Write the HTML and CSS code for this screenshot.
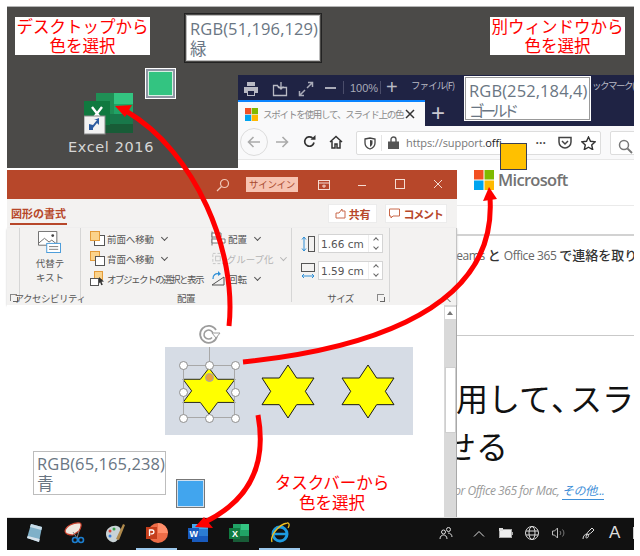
FILE: index.html
```html
<!DOCTYPE html>
<html lang="ja">
<head>
<meta charset="utf-8">
<title>スポイトで色を選択</title>
<link rel="stylesheet" href="styles.css">
</head>
<body>
<main class="stage">
  <section class="wallpaper">
    <div class="desk-icon">
      <svg class="excel-big" width="50" height="42" viewBox="0 0 50 42">
        <rect x="12" y="0" width="37" height="40" fill="#1f8f55"/>
        <rect x="30" y="0" width="19" height="11" fill="#33c481"/>
        <rect x="30" y="11" width="19" height="10" fill="#21a366"/>
        <rect x="12" y="21" width="37" height="10" fill="#18784a"/>
        <rect x="12" y="31" width="37" height="9" fill="#185c37"/>
        <rect x="0" y="8" width="26" height="24" fill="#10793f"/>
        <path d="M8 14l10 13M18 14L8 27" stroke="#fff" stroke-width="2.400"/>
        <rect x="0" y="23" width="21" height="18" fill="#f2f2f2" stroke="#8a8a8a"/>
        <path d="M5 37v-6l4 1 4-5h-3l5-2v7l-2-2-4 5v2z" fill="#2b5aa0"/>
      </svg>
      <span class="desk-label">Excel 2016</span>
    </div>
  </section>

  <section class="browser">
    <div class="fx-menu">
      <svg width="16" height="16" viewBox="0 0 16 16" class="fx-i1"><path d="M4 1h8v4H4zM1 6h14v6h-3v3H4v-3H1z" fill="#b9bac4"/><rect x="5" y="10" width="6" height="4" fill="#1f2344"/></svg>
      <svg width="16" height="16" viewBox="0 0 16 16" class="fx-i2"><path d="M1.500 4.500h4l1 2h8v8h-13zM9 1v7M6.500 5.500L9 8l2.500-2.500" fill="none" stroke="#b9bac4" stroke-width="1.300"/></svg>
      <svg width="16" height="16" viewBox="0 0 16 16" class="fx-i3"><path d="M9 7l5-5M10 1.500h4.500V6M7 9l-5 5M1.500 10v4.500H6" fill="none" stroke="#a9abb8" stroke-width="1.500"/></svg>
      <span class="fx-dash"></span>
      <span class="fx-sep"></span>
      <span class="fx-zoom">100%</span>
      <span class="fx-sep"></span>
      <span class="fx-plus">+</span>
      <span class="fx-file">ファイル(F)</span>
      <span class="fx-book">ックマーク(B)</span>
    </div>
    <div class="fx-tabs">
      <div class="fx-tab">
        <svg width="13" height="13" viewBox="0 0 13 13"><rect width="6.200" height="6.200" fill="#f25022"/><rect x="6.800" width="6.200" height="6.200" fill="#7fba00"/><rect y="6.800" width="6.200" height="6.200" fill="#00a4ef"/><rect x="6.800" y="6.800" width="6.200" height="6.200" fill="#ffb900"/></svg>
        <span class="fx-tab-text">スポイトを使用して、スライド上の色</span>
        <svg width="10" height="10" viewBox="0 0 10 10"><path d="M1 1l8 8M9 1l-8 8" stroke="#333" stroke-width="1.500"/></svg>
      </div>
      <span class="fx-newtab">+</span>
    </div>
    <div class="fx-toolbar">
      <span class="fx-back"><svg width="14" height="12" viewBox="0 0 14 12"><path d="M13 6H2M6.500 1L1.500 6l5 5" fill="none" stroke="#aaa" stroke-width="1.600"/></svg></span>
      <svg class="fx-fwd" width="14" height="12" viewBox="0 0 14 12"><path d="M1 6h11M7.500 1l5 5-5 5" fill="none" stroke="#aaa" stroke-width="1.600"/></svg>
      <svg class="fx-reload" width="13" height="13" viewBox="0 0 13 13"><path d="M11 7.500A4.700 4.700 0 1 1 9.500 3" fill="none" stroke="#333" stroke-width="1.700"/><path d="M7.500 4.800h5V0z" fill="#333"/></svg>
      <svg class="fx-home" width="14" height="14" viewBox="0 0 14 14"><path d="M1 7l6-5.500L13 7M3 6v7h3V9h2v4h3V6" fill="none" stroke="#333" stroke-width="1.500"/></svg>
      <div class="fx-url">
        <svg class="fx-shield" width="12" height="13" viewBox="0 0 12 13"><path d="M1 2l5-1 5 1v4c0 3-2 5-5 6-3-1-5-3-5-6z" fill="none" stroke="#444" stroke-width="1.300"/><path d="M6 3l2.500.6V6C8.500 8 7.500 9 6 9.800z" fill="#444"/></svg>
        <span class="fx-divider"></span>
        <svg class="fx-lock" width="11" height="13" viewBox="0 0 11 13"><path d="M3 6V3.500a2.500 2.500 0 0 1 5 0V6" fill="none" stroke="#555" stroke-width="1.400"/><rect y="5.500" width="11" height="7.500" fill="#555"/></svg>
        <span class="fx-addr"><span class="fx-proto">https://support.</span>offi</span>
        <span class="fx-dots">•••</span>
        <svg class="fx-pocket" width="14" height="13" viewBox="0 0 14 13"><path d="M1 1.500h12V6c0 3.500-3 6-6 6s-6-2.500-6-6z" fill="none" stroke="#444" stroke-width="1.500"/><path d="M4 5l3 3 3-3" fill="none" stroke="#444" stroke-width="1.500"/></svg>
        <svg class="fx-star" width="15" height="14" viewBox="0 0 15 14"><path d="M7.500 1l2 4.300 4.700.5-3.500 3.200 1 4.600-4.200-2.400-4.200 2.400 1-4.600L.8 5.800l4.700-.5z" fill="none" stroke="#333" stroke-width="1.400"/></svg>
      </div>
      <div class="fx-search"><svg width="15" height="15" viewBox="0 0 15 15"><circle cx="6" cy="6" r="4.500" fill="none" stroke="#777" stroke-width="1.500"/><path d="M9.500 9.500l4.500 4.500" stroke="#777" stroke-width="1.800"/></svg></div>
    </div>
    <div class="fx-page">
      <div class="ms-head">
        <svg width="20" height="20" viewBox="0 0 20 20"><rect width="9.500" height="9.500" fill="#f25022"/><rect x="10.500" width="9.500" height="9.500" fill="#7fba00"/><rect y="10.500" width="9.500" height="9.500" fill="#00a4ef"/><rect x="10.500" y="10.500" width="9.500" height="9.500" fill="#ffb900"/></svg>
        <span class="ms-name">Microsoft</span>
      </div>
      <div class="ms-nav"></div>
      <p class="ms-crumb"><span class="ms-latin">Teams</span> と <span class="ms-latin">Office 365</span> で連絡を取り合</p>
      <div class="ms-rule"></div>
      <h1 class="ms-title"><span class="ms-l1">用して<span class="ms-comma">、</span>スライ</span><span class="ms-l2">せる</span></h1>
      <p class="ms-applies">For Office 365 for Mac, <a class="ms-more">その他...</a></p>
    </div>
  </section>

  <section class="ppt">
    <div class="ppt-title">
      <svg class="ppt-search" width="14" height="14" viewBox="0 0 14 14"><circle cx="8.500" cy="5.500" r="4" fill="none" stroke="#f0c8b8" stroke-width="1.200"/><path d="M5.500 8.500L1 13" stroke="#f0c8b8" stroke-width="1.200"/></svg>
      <span class="ppt-signin">サインイン</span>
      <svg class="ppt-ctl ppt-ribbonmode" width="12" height="10" viewBox="0 0 12 10"><rect x=".5" y=".5" width="11" height="9" fill="none" stroke="#f5dcd2"/><path d="M.5 3h11M4 6h4M6 4.500V8" stroke="#f5dcd2"/></svg>
      <svg class="ppt-ctl ppt-min" width="10" height="10" viewBox="0 0 10 10"><path d="M1 5.500h8" stroke="#f5dcd2"/></svg>
      <svg class="ppt-ctl ppt-max" width="10" height="10" viewBox="0 0 10 10"><rect x=".5" y=".5" width="9" height="9" fill="none" stroke="#f5dcd2"/></svg>
      <svg class="ppt-ctl ppt-close" width="10" height="10" viewBox="0 0 10 10"><path d="M1 1l8 8M9 1l-8 8" stroke="#f5dcd2"/></svg>
    </div>
    <div class="ppt-head">
      <span class="ppt-tab">図形の書式</span>
      <span class="ppt-btn ppt-share"><svg width="11" height="11" viewBox="0 0 11 11"><path d="M1 5h3l3-4v2h3v7H1z" fill="none" stroke="#c9694a"/></svg>共有</span>
      <span class="ppt-btn ppt-comment"><svg width="11" height="11" viewBox="0 0 11 11"><path d="M.5 1h10v7H4L2 10V8H.5z" fill="none" stroke="#c9694a"/></svg>コメント</span>
    </div>
    <div class="ribbon">
      <div class="rb-group rb-stub"><span class="rb-launch rb-launch-l"></span></div>
      <div class="rb-group rb-access">
        <div class="rb-alt">
          <svg width="25" height="24" viewBox="0 0 25 24"><path d="M.5.500h20v15H.5z" fill="#fff" stroke="#666"/><path d="M1 13l6-5 5 4 3-2 5 4" fill="none" stroke="#666"/><circle cx="16" cy="5" r="1.500" fill="#444"/><rect x="9.500" y="13.500" width="15" height="10" fill="#fff" stroke="#3f96d8"/><path d="M12 17h10M12 20h10" stroke="#777"/></svg>
          <span class="rb-alt-text">代替テ<br>キスト</span>
        </div>
        <span class="rb-label">アクセシビリティ</span>
      </div>
      <div class="rb-group rb-arrange">
        <div class="rb-cols">
          <div class="rb-col">
            <div class="rb-row">
              <svg width="15" height="15" viewBox="0 0 15 15"><rect x="4.500" y="4.500" width="10" height="10" fill="#fff" stroke="#555"/><rect x=".5" y=".5" width="9" height="9" fill="#fbd38b" stroke="#e39b3a"/></svg>
              <span>前面へ移動</span><i class="rb-chev"></i>
            </div>
            <div class="rb-row">
              <svg width="15" height="15" viewBox="0 0 15 15"><rect x=".5" y=".5" width="9" height="9" fill="#fbd38b" stroke="#e39b3a"/><rect x="5.500" y="5.500" width="9" height="9" fill="#fff" stroke="#555"/></svg>
              <span>背面へ移動</span><i class="rb-chev"></i>
            </div>
            <div class="rb-row">
              <svg width="15" height="15" viewBox="0 0 15 15"><rect x="4.500" y=".5" width="8" height="8" fill="#fbd38b" stroke="#e39b3a"/><rect x=".5" y="7.500" width="8" height="7" fill="#fff" stroke="#555"/><path d="M9 6l5 4.500-2.500.2 1.300 3-1.500.5-1.200-3L9 12.500z" fill="#333"/></svg>
              <span class="rb-narrow">オブジェクトの選択と表示</span>
            </div>
          </div>
          <div class="rb-col rb-col2">
            <div class="rb-row">
              <svg width="15" height="15" viewBox="0 0 15 15"><path d="M1 .5v14" stroke="#777"/><path d="M1 2h9v4H1zM1 8h13v4H1z" fill="#fff" stroke="#777"/></svg>
              <span>配置</span><i class="rb-chev"></i>
            </div>
            <div class="rb-row rb-off">
              <svg width="15" height="15" viewBox="0 0 15 15"><path d="M2 2h11v11H2z" fill="none" stroke="#c4c4c4" stroke-dasharray="3 2"/><rect x="5" y="5" width="5" height="5" fill="none" stroke="#c4c4c4"/></svg>
              <span>グループ化</span><i class="rb-chev"></i>
            </div>
            <div class="rb-row">
              <svg width="15" height="15" viewBox="0 0 15 15"><path d="M1 14L13 6v8z" fill="none" stroke="#555"/><path d="M2 8a4.500 4.500 0 0 1 6-5" fill="none" stroke="#2f8fd6" stroke-width="1.300"/><path d="M7 0l3 3-3 2z" fill="#2f8fd6"/></svg>
              <span>回転</span><i class="rb-chev"></i>
            </div>
          </div>
        </div>
        <span class="rb-label">配置</span>
      </div>
      <div class="rb-group rb-size">
        <div class="rb-sizes">
          <div class="rb-size-row">
            <svg width="14" height="16" viewBox="0 0 14 16"><path d="M3 1v14M1 3.500L3 1l2 2.500M1 12.500L3 15l2-2.500" fill="none" stroke="#2f8fd6"/><rect x="7.500" y=".5" width="6" height="15" fill="none" stroke="#555"/></svg>
            <div class="rb-input"><span>1.66 cm</span><em class="rb-spin"><i class="up"></i><i class="down"></i></em></div>
          </div>
          <div class="rb-size-row">
            <svg width="14" height="16" viewBox="0 0 14 16"><rect x=".5" y=".5" width="13" height="8" fill="none" stroke="#555"/><path d="M1 13h12M3 11l-2 2 2 2M11 11l2 2-2 2" fill="none" stroke="#2f8fd6"/></svg>
            <div class="rb-input"><span>1.59 cm</span><em class="rb-spin"><i class="up"></i><i class="down"></i></em></div>
          </div>
        </div>
        <span class="rb-label">サイズ</span>
        <span class="rb-launch rb-launch-r"></span>
      </div>
      <svg class="rb-collapse" width="9" height="6" viewBox="0 0 9 6"><path d="M.5 5L4.500 1l4 4" fill="none" stroke="#555"/></svg>
    </div>
    <div class="doc">
      <div class="slide-area">
        <div class="slide-rotate">
          <svg width="24" height="22" viewBox="0 0 24 22"><path d="M18 6A8.500 8.500 0 1 0 19 12" fill="none" stroke="#9c9c9c" stroke-width="1.800"/><path d="M15 10A4.500 4.500 0 1 0 14 13.500" fill="none" stroke="#9c9c9c" stroke-width="1.500"/><path d="M14 9h8l-4 5z" fill="#fff" stroke="#9c9c9c"/></svg>
        </div>
        <div class="slide">
          <div class="star-cell">
            <svg class="star star-selected" width="52" height="46" viewBox="0 0 156 159" preserveAspectRatio="none"><polygon points="78,0 104,39 156,39 130,79 156,119 104,119 78,159 52,119 0,119 26,79 0,39 52,39"/></svg>
            <span class="sel-frame"></span><span class="sel-stem"></span>
            <i class="h h1"></i><i class="h h2"></i><i class="h h3"></i><i class="h h4"></i><i class="h h5"></i><i class="h h6"></i><i class="h h7"></i><i class="h h8"></i>
            <i class="h-adj"></i>
          </div>
          <svg class="star" width="52" height="53" viewBox="0 0 156 159"><polygon points="78,0 104,39 156,39 130,79 156,119 104,119 78,159 52,119 0,119 26,79 0,39 52,39"/></svg>
          <svg class="star" width="52" height="53" viewBox="0 0 156 159"><polygon points="78,0 104,39 156,39 130,79 156,119 104,119 78,159 52,119 0,119 26,79 0,39 52,39"/></svg>
        </div>
      </div>
      <div class="scrollbar">
        <span class="sb-up"></span>
        <span class="sb-thumb"></span>
      </div>
    </div>
  </section>

  <section class="taskbar">
    <div class="tb-apps">
      <span class="tb-app"><svg width="20" height="20" viewBox="0 0 20 20"><path d="M3 15L7 1l11 3-3 15z" fill="#7fb0c8"/><path d="M3 15l12 4 .7-3L3.800 13z" fill="#d8e2ea"/><path d="M7 1l11 3-.6 3L6 4z" fill="#c8dce8"/></svg></span>
      <span class="tb-app"><svg width="22" height="22" viewBox="0 0 22 22"><path d="M1 9C2 4 10 0 16 1c2 .5 1 5-1 8l-6 4C5 13 1 12 1 9z" fill="#efe8e0" stroke="#c8402c" stroke-width="1.200"/><path d="M9 10l4 6M15 9l-2 7" stroke="#888"/><circle cx="11" cy="18" r="2.500" fill="none" stroke="#1c7fd0" stroke-width="1.600"/><circle cx="17" cy="18" r="2.500" fill="none" stroke="#1c7fd0" stroke-width="1.600"/></svg></span>
      <span class="tb-app"><svg width="22" height="22" viewBox="0 0 22 22"><path d="M1 12C1 6 7 3 12 4c4 1 5 5 3 9-2 5-4 8-8 7-3-1-6-4-6-8z" fill="#c9d3d6"/><circle cx="5" cy="9" r="1.500" fill="#d9453a"/><circle cx="9" cy="7" r="1.500" fill="#3aa14c"/><circle cx="5" cy="14" r="1.500" fill="#3a7dd9"/><path d="M11 17l7-15 2 1-6 15z" fill="#b08a4c"/></svg></span>
      <span class="tb-app tb-active"><svg width="22" height="20" viewBox="0 0 22 20"><circle cx="12" cy="10" r="10" fill="#ed6c47"/><path d="M12 0a10 10 0 0 1 10 10H12z" fill="#ff8f6b"/><rect y="4" width="11" height="12" fill="#c43e1c"/><path d="M3.500 13V7h2.500a1.800 1.800 0 0 1 0 3.800H4.500" fill="none" stroke="#fff" stroke-width="1.300"/></svg></span>
      <span class="tb-app"><svg width="20" height="20" viewBox="0 0 20 20"><rect x="4" y="1" width="16" height="18" fill="#2b7cd3"/><rect x="4" y="1" width="16" height="5" fill="#41a5ee"/><rect x="4" y="13" width="16" height="6" fill="#185abd"/><rect y="5" width="11" height="11" fill="#185abd"/><text x="1.500" y="14" class="tb-letter">W</text></svg></span>
      <span class="tb-app"><svg width="20" height="20" viewBox="0 0 20 20"><rect x="4" y="1" width="16" height="18" fill="#21a366"/><rect x="12" y="1" width="8" height="6" fill="#33c481"/><rect x="4" y="13" width="16" height="6" fill="#185c37"/><rect y="5" width="11" height="11" fill="#107c41"/><text x="3" y="14" class="tb-letter">X</text></svg></span>
      <span class="tb-app tb-active"><svg width="20" height="22" viewBox="0 0 20 22"><ellipse cx="10" cy="12" rx="7" ry="7" fill="none" stroke="#1e9be0" stroke-width="3"/><path d="M4 12h12" stroke="#1e9be0" stroke-width="2.500"/><path d="M2 20C0 14 8 3 17 1c2-.500 3 2 1 5" fill="none" stroke="#f0c020" stroke-width="1.300"/></svg></span>
    </div>
    <div class="tb-tray">
      <svg class="tray-people" width="14" height="14" viewBox="0 0 14 14"><circle cx="9.500" cy="3.500" r="2" fill="none" stroke="#ddd"/><circle cx="4.500" cy="6" r="2" fill="none" stroke="#ddd"/><path d="M1 13c0-3 2-4 3.500-4S8 10 8 13M9 7c2 0 4 1.500 4 4" fill="none" stroke="#ddd"/></svg>
      <svg class="tray-up" width="12" height="7" viewBox="0 0 12 7"><path d="M1 6.500l5-5 5 5" fill="none" stroke="#ddd"/></svg>
      <svg class="tray-bat" width="14" height="10" viewBox="0 0 14 10"><rect x=".5" y="1.500" width="12" height="8" fill="#eee" stroke="#aaa"/><rect y="0" width="4" height="3" fill="#ddd"/><rect x="13" y="4" width="1" height="3" fill="#aaa"/></svg>
      <svg class="tray-net" width="14" height="14" viewBox="0 0 14 14"><circle cx="7" cy="7" r="6.500" fill="none" stroke="#ddd"/><ellipse cx="7" cy="7" rx="3" ry="6.500" fill="none" stroke="#ddd"/><path d="M1 5h12M1 9h12" stroke="#ddd"/></svg>
      <svg class="tray-vol" width="14" height="12" viewBox="0 0 14 12"><path d="M.5 4h2l3-3v10l-3-3h-2z" fill="none" stroke="#bbb"/><path d="M8 4a3 3 0 0 1 0 4M10.500 2.500a5 5 0 0 1 0 7" fill="none" stroke="#777"/></svg>
      <svg class="tray-pen" width="14" height="14" viewBox="0 0 14 14"><path d="M1 13c0-3 2-5 4-5s2 3 0 4-1-5 3-8l2-2 2 2-2 2c-2 2-4 3-6 3" fill="none" stroke="#ddd"/></svg>
      <span class="tray-a">A</span>
      <span class="tray-last"></span>
    </div>
  </section>

  <div class="caption caption-desktop">デスクトップから<br>色を選択</div>
  <div class="caption caption-window">別ウィンドウから<br>色を選択</div>
  <div class="caption caption-taskbar">タスクバーから<br>色を選択</div>

  <div class="tip tip-green">RGB(51,196,129)<br>緑</div>
  <div class="tip tip-gold">RGB(252,184,4)<br><span class="tip-kana">ゴールド</span></div>
  <div class="tip tip-blue">RGB(65,165,238)<br>青</div>

  <span class="swatch swatch-green"></span>
  <span class="swatch swatch-gold"></span>
  <span class="swatch swatch-blue"></span>

  <svg class="arrows" width="640" height="556" viewBox="0 0 640 556">
    <g fill="none" stroke="#ff0000" stroke-width="5">
      <path d="M229 326C237 252 196 152 126 111"/>
      <path d="M243 362C340 352 498 320 490 198"/>
      <path d="M258 415C268 470 244 503 205 522"/>
    </g>
    <polygon points="115,106 132,105 125,117" fill="#ff0000"/>
    <polygon points="489,187 483,201 497,199" fill="#ff0000"/>
    <polygon points="195,527 204,517 213,528" fill="#ff0000"/>
  </svg>
</main>
</body>
</html>
```
FILE: styles.css
```css
* { box-sizing: border-box; }
html, body { margin: 0; padding: 0; background: #fff; }
body { font-family: "Noto Sans CJK JP", "Noto Sans", sans-serif; }
.stage { position: relative; width: 640px; height: 556px; overflow: hidden; background: #fff; }

.wallpaper { position: absolute; left: 7px; top: 6px; width: 627px; height: 162px; background: #4b4a48; border-top: 1px solid #b5b5b5; }
.desk-icon { position: absolute; left: 59px; top: 86px; width: 90px; display: flex; flex-direction: column; align-items: center; gap: 4px; }
.excel-big { margin-left: -4px; }
.desk-label { font: 14.500px/17px "DejaVu Sans", sans-serif; color: #d6d6d6; white-space: nowrap; letter-spacing: .6px; }

/* browser */
.browser { position: absolute; left: 238px; top: 75px; width: 396px; height: 442px; background: #fff; display: flex; flex-direction: column; overflow: hidden; }
.fx-menu { position: relative; height: 25px; background: #1f2344; flex: none; color: #b9bac4; }
.fx-menu > * { position: absolute; }
.fx-i1 { left: 5px; top: 6px; }
.fx-i2 { left: 34px; top: 6px; }
.fx-i3 { left: 60px; top: 6px; }
.fx-dash { left: 87px; top: 12px; width: 11px; height: 2px; background: #a9abb8; }
.fx-sep { top: 6px; width: 1px; height: 13px; background: #4a4d6a; left: 105px; }
.fx-zoom { left: 112px; top: 5px; font: 11px/16px "Liberation Sans", sans-serif; color: #a9abb8; }
.fx-zoom + .fx-sep { left: 142px; }
.fx-plus { left: 148px; top: -1px; font: 20px/26px "Liberation Sans", sans-serif; color: #b9bac4; }
.fx-file { left: 173px; top: 2px; font-size: 9.500px; line-height: 16px; letter-spacing: -.9px; white-space: nowrap; }
.fx-book { left: 354px; top: 2px; font-size: 9.500px; line-height: 16px; letter-spacing: -1.500px; white-space: nowrap; }
.fx-tabs { display: flex; align-items: center; height: 26px; background: #1f2344; flex: none; }
.fx-tab { display: flex; align-items: center; gap: 5px; width: 187px; height: 26px; padding: 0 10px 0 7px; background: #f9f9fa; border-top: 2px solid #0a84ff; }
.fx-tab-text { flex: 1; min-width: 0; white-space: nowrap; font-size: 9.500px; color: #8a8a8a; letter-spacing: -1.200px; }
.fx-newtab { width: 26px; text-align: center; font: 24px/26px "Liberation Sans", sans-serif; color: #c8c8d0; }
.fx-toolbar { position: relative; height: 34px; flex: none; background: #f9f9fa; border-bottom: 1px solid #e8e8e8; }
.fx-toolbar > * { position: absolute; }
.fx-back { left: 2px; top: 2px; width: 28px; height: 28px; border: 1px solid #dcdcdc; border-radius: 50%; display: flex; align-items: center; justify-content: center; }
.fx-fwd { left: 37px; top: 10px; }
.fx-reload { left: 65px; top: 9px; }
.fx-home { left: 91px; top: 9px; }
.fx-url { left: 118px; top: 5px; width: 245px; height: 24px; background: #fff; border: 1px solid #ddd; border-radius: 2px; }
.fx-url > * { position: absolute; }
.fx-shield { left: 7px; top: 5px; }
.fx-divider { left: 24px; top: 3px; width: 1px; height: 16px; background: #e4e4e4; }
.fx-lock { left: 31px; top: 4px; }
.fx-addr { left: 49px; top: 2px; font: 11px/18px "Open Sans", sans-serif; color: #222; white-space: nowrap; letter-spacing: -.1px; }
.fx-proto { color: #777; }
.fx-dots { left: 179px; top: 3px; font: 7px/16px "Liberation Sans", sans-serif; color: #444; letter-spacing: 1px; }
.fx-pocket { left: 201px; top: 4px; }
.fx-star { left: 224px; top: 4px; }
.fx-search { left: 372px; top: 5px; width: 40px; height: 24px; background: #fff; border: 1px solid #ddd; border-radius: 2px; padding: 3px 7px; }
.fx-page { position: relative; flex: 1; }
.ms-head { position: absolute; left: 236px; top: 10px; display: flex; align-items: center; gap: 4px; }
.ms-name { font: 600 16.500px/20px "Open Sans", sans-serif; color: #737373; letter-spacing: -.7px; }
.ms-nav { position: absolute; left: 0; right: 0; top: 45px; border-top: 1px solid #eaeaea; }
.ms-crumb { position: absolute; left: 212px; top: 85px; margin: 0; font-size: 13px; line-height: 20px; color: #333; white-space: nowrap; font-weight: 500; }
.ms-latin { font-family: "Open Sans", sans-serif; font-weight: 400; font-size: 12px; color: #666; letter-spacing: -.4px; }
.ms-nav::after { content: ""; position: absolute; left: 0; right: 0; top: 28px; border-top: 2px solid #d2d2d2; }
.ms-rule { position: absolute; left: 0; right: 0; top: 175px; border-top: 1px solid #c9c9c9; }
.ms-title { position: absolute; left: 218px; top: 213px; margin: 0; font-weight: 400; font-size: 32px; line-height: 48px; color: #111; white-space: nowrap; }
.ms-l1 { display: block; }
.ms-comma { letter-spacing: -14px; margin-right: 1px; }
.ms-l2 { display: block; margin-left: -12px; }
.ms-applies { position: absolute; left: 211px; top: 321px; margin: 0; font: italic 12px/20px "Open Sans", "Noto Sans CJK JP", sans-serif; color: #9a9a9a; white-space: nowrap; letter-spacing: -.45px; }
.ms-more { color: #3f8fd8; border-bottom: 1px solid #3f8fd8; }

/* powerpoint */
.ppt { position: absolute; left: 7px; top: 170px; width: 450px; height: 347px; display: flex; flex-direction: column; background: #fff; }
.ppt-title { position: relative; flex: none; height: 29px; background: #b7472a; }
.ppt-title > * { position: absolute; }
.ppt-search { left: 209px; top: 8px; }
.ppt-signin { left: 239px; top: 7px; width: 52px; height: 15px; background: #f7c4b2; color: #a8492e; font-size: 9.500px; line-height: 15px; text-align: center; letter-spacing: -.3px; }
.ppt-ribbonmode { left: 311px; top: 10px; }
.ppt-min { left: 350px; top: 10px; }
.ppt-max { left: 388px; top: 9px; }
.ppt-close { left: 426px; top: 9px; }
.ppt-head { flex: none; height: 29px; background: #f3f2f1; display: flex; align-items: center; gap: 8px; padding: 0 10px 0 3px; }
.ppt-tab { margin-right: auto; font-size: 11px; font-weight: 700; color: #b7472a; line-height: 19px; letter-spacing: 0; border-bottom: 2px solid #b7472a; padding: 0 1px; margin-top: 2px; }
.ppt-btn { height: 19px; background: #fff; border: 1px solid #ececec; color: #b7472a; display: flex; align-items: center; justify-content: center; gap: 3px; font-size: 11px; font-weight: 700; letter-spacing: -.3px; }
.ppt-share { width: 49px; }
.ppt-comment { width: 62px; letter-spacing: -1.200px; }
.ribbon { position: relative; flex: none; height: 77px; background: #f3f2f1; display: flex; box-shadow: 0 1px 2px #c8c8c8; border-right: 1px solid #c4c4c4; }
.rb-group { position: relative; height: 74px; border-right: 1px solid #d6d6d6; display: flex; flex-direction: column; flex: none; }
.rb-stub { width: 13px; }
.rb-launch { position: absolute; width: 7px; height: 7px; border: 1px solid #888; border-width: 1px 0 0 1px; }
.rb-launch::after { content: ""; position: absolute; left: 2px; top: 2px; width: 4px; height: 4px; border: 1px solid #666; border-width: 0 1px 1px 0; }
.rb-launch-l { left: 3px; top: 66px; }
.rb-launch-r { right: 5px; top: 66px; }
.rb-access { width: 61px; align-items: center; }
.rb-alt { height: 56px; padding-top: 3px; display: flex; flex-direction: column; align-items: center; gap: 3px; }
.rb-alt-text { font-size: 9.500px; line-height: 14px; color: #555; text-align: center; }
.rb-label { height: 13px; margin-top: auto; margin-bottom: -3px; font-size: 9.500px; line-height: 13px; color: #555; text-align: center; letter-spacing: -.5px; white-space: nowrap; }
.rb-arrange { width: 211px; }
.rb-cols { display: flex; padding: 1px 0 0 9px; }
.rb-col { width: 121px; display: flex; flex-direction: column; gap: 1px; }
.rb-row { display: flex; align-items: center; gap: 2px; height: 19px; font-size: 9.500px; color: #555; white-space: nowrap; letter-spacing: -.1px; }
.rb-narrow { letter-spacing: -1.500px; font-size: 9.500px; }
.rb-col2 { width: 75px; }
.rb-off { color: #b5b5b5; }
.rb-chev { width: 5px; height: 5px; margin: -3px 0 0 6px; border: 1px solid #555; border-width: 0 1px 1px 0; transform: rotate(45deg); }
.rb-off .rb-chev { border-color: #b5b5b5; }
.rb-size { width: 98px; }
.rb-sizes { display: flex; flex-direction: column; gap: 8px; padding: 6px 0 0 9px; }
.rb-size-row { display: flex; align-items: center; gap: 3px; }
.rb-input { flex: none; width: 65px; height: 19px; background: #fff; border: 1px solid #d4d4d4; display: flex; align-items: center; justify-content: space-between; padding-left: 2px; font: 10.500px "DejaVu Sans", sans-serif; color: #555; }
.rb-spin { width: 14px; height: 17px; display: flex; flex-direction: column; align-items: center; justify-content: space-around; border-left: 1px solid #eee; }
.rb-spin i { width: 4px; height: 4px; border: 1px solid #666; border-width: 1px 0 0 1px; }
.rb-spin .up { transform: rotate(45deg); margin-top: 2px; }
.rb-spin .down { transform: rotate(225deg); margin-bottom: 2px; }
.rb-collapse { position: absolute; left: 435px; top: 69px; }
.doc { flex: 1; display: flex; min-height: 0; }
.slide-area { position: relative; flex: none; width: 437px; background: #fff; }
.slide-rotate { position: absolute; left: 191px; top: 19px; }
.slide { position: absolute; left: 158px; top: 42px; width: 248px; height: 88px; background: #d6dce5; display: flex; align-items: center; padding-left: 18px; gap: 28px; }
.star polygon { fill: #ffff00; stroke: #1a1a1a; stroke-width: 3; }
.star { overflow: visible; flex: none; }
.star-cell { position: relative; width: 52px; height: 53px; margin-right: -1px; display: flex; align-items: center; }
.sel-frame { position: absolute; left: 0; top: 0; width: 52px; height: 53px; border: 1px solid #a8a8a8; }
.sel-stem { position: absolute; left: 26px; top: -18px; width: 1px; height: 18px; background: #a8a8a8; }
.h { position: absolute; width: 9px; height: 9px; border-radius: 50%; background: #fff; border: 1px solid #8e8e8e; margin: -4px 0 0 -4px; }
.h1 { left: 0; top: 0; } .h2 { left: 26px; top: 0; } .h3 { left: 52px; top: 0; }
.h4 { left: 0; top: 27px; } .h5 { left: 52px; top: 27px; }
.h6 { left: 0; top: 53px; } .h7 { left: 26px; top: 53px; } .h8 { left: 52px; top: 53px; }
.h-adj { position: absolute; left: 22px; top: 8px; width: 9px; height: 9px; border-radius: 50%; background: #e8a33c; border: 1px solid #a8a8a8; }
.scrollbar { position: relative; flex: 1; background: #d9d9d9; border-right: 1px solid #a8a8a8; }
.sb-up { position: absolute; left: 1px; top: 2px; width: 11px; height: 12px; background: #fff; }
.sb-up::after { content: ""; position: absolute; left: 2px; top: 4px; border: 3.500px solid transparent; border-top: 0; border-bottom: 4px solid #777; }
.sb-thumb { position: absolute; left: 1px; top: 62px; width: 11px; height: 66px; background: #fff; border: 1px solid #cfcfcf; }

/* taskbar */
.taskbar { position: absolute; left: 7px; top: 517px; width: 627px; height: 33px; background: #111; border-top: 1px solid #ddd; display: flex; justify-content: space-between; align-items: center; }
.tb-apps { display: flex; padding-left: 6px; height: 100%; }
.tb-app { width: 41px; height: 100%; display: flex; align-items: center; justify-content: center; border-bottom: 2px solid transparent; }
.tb-active { border-bottom-color: #9cc8ec; }
.tb-letter { font: 700 9px "Liberation Sans", sans-serif; fill: #fff; }
.tb-tray { position: relative; width: 200px; height: 100%; }
.tb-tray > * { position: absolute; }
.tray-people { left: 5px; top: 8px; }
.tray-up { left: 39px; top: 12px; }
.tray-bat { left: 65px; top: 10px; }
.tray-net { left: 91px; top: 8px; }
.tray-vol { left: 118px; top: 9px; }
.tray-pen { left: 148px; top: 8px; }
.tray-a { left: 175px; top: 3px; font: 17px/24px "Liberation Sans", sans-serif; color: #ddd; }
.tray-last { left: 199px; top: 9px; width: 1px; height: 12px; background: #ccc; }

/* overlays */
.caption { position: absolute; background: #fff; color: #ff0000; text-align: center; font-size: 16.500px; line-height: 19px; white-space: nowrap; }
.caption-desktop { left: 15px; top: 17px; width: 135px; height: 38px; }
.caption-window { left: 490px; top: 17px; width: 135px; height: 38px; }
.caption-taskbar { left: 270px; top: 472px; width: 124px; height: 40px; background: transparent; line-height: 20px; }
.tip { position: absolute; background: #fff; border: 1px solid #bdbdbd; color: #6a7683; font: 16.500px/20px "Open Sans", "Noto Sans CJK JP", sans-serif; padding: 3px 3px; white-space: nowrap; letter-spacing: .1px; }
.tip-kana { letter-spacing: -4px; font-size: 15.500px; }
.tip-green { left: 186px; top: 15px; width: 134px; height: 46px; outline: 1px solid #222; outline-offset: 1px; }
.tip-gold { left: 465px; top: 77px; width: 125px; height: 43px; outline: 1px solid #fff; outline-offset: 0; border-color: #999; }
.tip-blue { left: 33px; top: 451px; width: 133px; height: 44px; padding-top: 2px; }
.swatch { position: absolute; }
.swatch-green { left: 145px; top: 68px; width: 31px; height: 31px; background: #33c481; border: 1px solid #fff; box-shadow: inset 0 0 0 2px #8f95a3, inset 0 0 0 3px #d8f0e4; }
.swatch-gold { left: 500px; top: 143px; width: 27px; height: 27px; background: #ffc000; border: 1px solid #3a3f55; }
.swatch-blue { left: 176px; top: 479px; width: 29px; height: 29px; background: #41a5ee; border: 1px solid #777; box-shadow: inset 0 0 0 1px #cfe0f0; }
.arrows { position: absolute; left: 0; top: 0; pointer-events: none; }
```
